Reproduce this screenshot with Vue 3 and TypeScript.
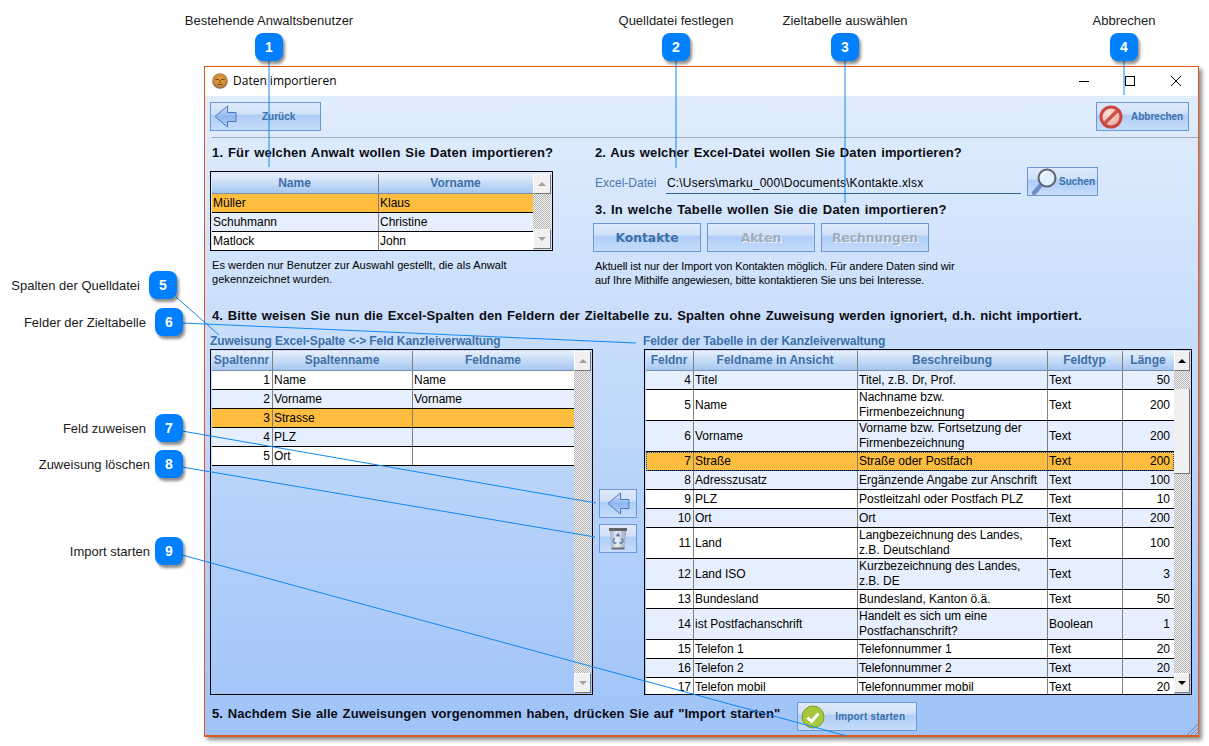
<template>
  <div class="page">
    <div class="window">
      <div class="titlebar">
        <svg class="app-icon" viewBox="0 0 16 16">
          <defs>
            <radialGradient id="appFill" cx="0.5" cy="0.45" r="0.55">
              <stop offset="0" stop-color="#e8a63f" />
              <stop offset="0.7" stop-color="#c98a3a" />
              <stop offset="1" stop-color="#7d6650" />
            </radialGradient>
          </defs>
          <circle cx="8" cy="8" r="7.800" fill="url(#appFill)" />
          <path d="M3.500 6.500h3.500M9 6.500h3.500M8 7v3M5.500 11.500h5" stroke="#8a3f1c" stroke-width="1.200" fill="none" />
        </svg>
        <span class="title">Daten importieren</span>
        <div class="win-controls">
          <svg width="12" height="12" viewBox="0 0 12 12"><path d="M1 6.500h10" stroke="#000" /></svg>
          <svg width="12" height="12" viewBox="0 0 12 12"><rect x="1.500" y="1.500" width="9" height="9" fill="none" stroke="#000" /></svg>
          <svg width="12" height="12" viewBox="0 0 12 12"><path d="M1 1l10 10M11 1L1 11" stroke="#000" /></svg>
        </div>
      </div>

      <div class="content">
        <div class="toolbar">
          <button class="btn btn-back">
            <svg class="arrow" width="23" height="23" viewBox="0 0 23 23">
              <defs>
                <linearGradient id="arrowFill" x1="0" y1="0" x2="0" y2="1">
                  <stop offset="0" stop-color="#d6e6fb" />
                  <stop offset="0.5" stop-color="#8fb6ee" />
                  <stop offset="1" stop-color="#b5d0f5" />
                </linearGradient>
              </defs>
              <path d="M1 11.500L13.500 1v6.500H22v9h-8.500v5.500z" fill="url(#arrowFill)" stroke="#4f76bd" />
            </svg>
            <span>Zurück</span>
          </button>
          <button class="btn btn-cancel">
            <svg width="24" height="24" viewBox="0 0 24 24">
              <defs>
                <radialGradient id="stopFill" cx="0.4" cy="0.35" r="0.7">
                  <stop offset="0" stop-color="#f6e3dc" />
                  <stop offset="1" stop-color="#e3a79c" />
                </radialGradient>
              </defs>
              <circle cx="12" cy="12" r="10" fill="url(#stopFill)" stroke="#c9473e" stroke-width="3" />
              <path d="M5.500 18.500L18.500 5.500" stroke="#cf5047" stroke-width="3.400" />
            </svg>
            <span>Abbrechen</span>
          </button>
        </div>
        <div class="separator"></div>

        <div class="top">
          <section class="top-left">
            <h2>1. Für welchen Anwalt wollen Sie Daten importieren?</h2>
            <div class="grid grid-lawyers">
              <div class="grid-main">
                <div class="row head">
                  <div v-for="c in lawyerCols" :key="c" class="cell">{{ c }}</div>
                </div>
                <div v-for="(r, i) in lawyers" :key="r[0]" class="row" :class="{ alt: i % 2 === 1, sel: i === 0 }">
                  <div class="cell">{{ r[0] }}</div>
                  <div class="cell">{{ r[1] }}</div>
                </div>
              </div>
              <div class="scroll">
                <div class="sb-btn"><i class="up"></i></div>
                <div class="sb-btn"><i class="down"></i></div>
              </div>
            </div>
            <p class="hint hint-left">Es werden nur Benutzer zur Auswahl gestellt, die als Anwalt<br />gekennzeichnet wurden.</p>
          </section>

          <section class="top-right">
            <h2>2. Aus welcher Excel-Datei wollen Sie Daten importieren?</h2>
            <div class="file-row">
              <label>Excel-Datei</label>
              <div class="file-input">C:\Users\marku_000\Documents\Kontakte.xlsx</div>
              <button class="btn btn-search">
                <svg width="28" height="28" viewBox="0 0 28 28">
                  <path d="M3 25l7-8" stroke="#6f8fc4" stroke-width="4.500" stroke-linecap="round" />
                  <circle cx="16" cy="10" r="8.500" fill="#dff2fd" stroke="#5d6675" stroke-width="2" />
                  <path d="M11 9a5 5 0 0 1 5-5" stroke="#fff" stroke-width="2" fill="none" />
                </svg>
                <span>Suchen</span>
              </button>
            </div>
            <h2 class="h3">3. In welche Tabelle wollen Sie die Daten importieren?</h2>
            <div class="target-row">
              <button class="btn btn-target active">Kontakte</button>
              <button class="btn btn-target">Akten</button>
              <button class="btn btn-target">Rechnungen</button>
            </div>
            <p class="hint hint-right">Aktuell ist nur der Import von Kontakten möglich. Für andere Daten sind wir<br />auf Ihre Mithilfe angewiesen, bitte kontaktieren Sie uns bei Interesse.</p>
          </section>
        </div>

        <h2 class="h4">4. Bitte weisen Sie nun die Excel-Spalten den Feldern der Zieltabelle zu. Spalten ohne Zuweisung werden ignoriert, d.h. nicht importiert.</h2>

        <div class="mapping">
          <div class="map-left">
            <div class="caption">Zuweisung Excel-Spalte &lt;-&gt; Feld Kanzleiverwaltung</div>
            <div class="grid grid-columns">
              <div class="grid-main">
                <div class="row head">
                  <div v-for="c in sourceCols" :key="c" class="cell">{{ c }}</div>
                </div>
                <div v-for="(r, i) in sourceRows" :key="r[0]" class="row" :class="{ alt: i % 2 === 1, sel: i === 2 }">
                  <div class="cell num">{{ r[0] }}</div>
                  <div class="cell">{{ r[1] }}</div>
                  <div class="cell">{{ r[2] }}</div>
                </div>
              </div>
              <div class="scroll">
                <div class="sb-btn"><i class="up"></i></div>
                <div class="sb-btn"><i class="down"></i></div>
              </div>
            </div>
          </div>

          <div class="map-actions">
            <button class="btn btn-icon">
              <svg width="23" height="23" viewBox="0 0 23 23">
                <path d="M1 11.500L13.500 1v6.500H22v9h-8.500v5.500z" fill="url(#arrowFill)" stroke="#4f76bd" />
              </svg>
            </button>
            <button class="btn btn-icon">
              <svg width="20" height="23" viewBox="0 0 20 23">
                <defs>
                  <linearGradient id="binFill" x1="0" y1="0" x2="1" y2="0">
                    <stop offset="0" stop-color="#a3aebd" />
                    <stop offset="0.45" stop-color="#eef2f6" />
                    <stop offset="1" stop-color="#98a4b4" />
                  </linearGradient>
                </defs>
                <path d="M2 3h16l-1.500 19h-13z" fill="url(#binFill)" />
                <rect x="1" y="1" width="18" height="3" fill="#5f6368" />
                <rect x="3.500" y="20.500" width="13" height="2" fill="#6b6f75" />
                <path d="M8.500 9.500l1.500-2.500 1.500 2.500M13.500 11l1.500 3-1.500 2h-2M8.500 16H6l-1-2 1.500-3" fill="none" stroke="#5f7fb8" stroke-width="1.500" />
              </svg>
            </button>
          </div>

          <div class="map-right">
            <div class="caption caption-right">Felder der Tabelle in der Kanzleiverwaltung</div>
            <div class="grid grid-fields">
              <div class="grid-main">
                <div class="row head">
                  <div v-for="c in fieldCols" :key="c" class="cell">{{ c }}</div>
                </div>
                <div
                  v-for="(r, i) in fieldRows"
                  :key="r.nr"
                  class="row"
                  :class="{ alt: i % 2 === 0 && r.nr !== 7, sel: r.nr === 7, tall: r.desc.includes('\n') }"
                >
                  <div class="cell num">{{ r.nr }}</div>
                  <div class="cell">{{ r.name }}</div>
                  <div class="cell desc">{{ r.desc }}</div>
                  <div class="cell">{{ r.type }}</div>
                  <div class="cell num">{{ r.len }}</div>
                </div>
              </div>
              <div class="scroll">
                <div class="sb-btn dark"><i class="up"></i></div>
                <div class="sb-thumb"></div>
                <div class="sb-btn dark"><i class="down"></i></div>
              </div>
            </div>
          </div>
        </div>

        <div class="bottom">
          <h2>5. Nachdem Sie alle Zuweisungen vorgenommen haben, drücken Sie auf "Import starten"</h2>
          <button class="btn btn-start">
            <svg width="24" height="24" viewBox="0 0 24 24">
              <circle cx="12" cy="12" r="11" fill="#a6c63c" stroke="#7f9c2a" />
              <path d="M6.500 12.500l4 4 7-8" fill="none" stroke="#fff" stroke-width="3" />
            </svg>
            <span>Import starten</span>
          </button>
        </div>

        <svg class="grip" width="12" height="12" viewBox="0 0 12 12">
          <path d="M1 12L12 1M5 12l7-7M9 12l3-3" stroke="#7f8b99" />
        </svg>
      </div>
    </div>

    <svg class="leaders" width="1209" height="746">
      <line v-for="(l, i) in leaders" :key="i" :x1="l[0]" :y1="l[1]" :x2="l[2]" :y2="l[3]" />
    </svg>
    <template v-for="c in callouts" :key="c.n">
      <div class="bubble" :style="{ left: c.x + 'px', top: c.y + 'px' }">{{ c.n }}</div>
      <div
        class="callout-label"
        :class="{ above: c.top }"
        :style="c.top
          ? { left: c.x + 14 - 120 + 'px', top: '12px' }
          : { right: 1209 - c.labelEnd! + 'px', top: c.y + 6 + 'px' }"
      >{{ c.label }}</div>
    </template>
  </div>
</template>

<script setup lang="ts">
interface Callout {
  n: number
  x: number
  y: number
  label: string
  top?: boolean
  labelEnd?: number
}

interface FieldRow {
  nr: number
  name: string
  desc: string
  type: string
  len: number
}

const lawyerCols = ['Name', 'Vorname']
const lawyers = [
  ['Müller', 'Klaus'],
  ['Schuhmann', 'Christine'],
  ['Matlock', 'John']
]

const sourceCols = ['Spaltennr', 'Spaltenname', 'Feldname']
const sourceRows = [
  [1, 'Name', 'Name'],
  [2, 'Vorname', 'Vorname'],
  [3, 'Strasse', ''],
  [4, 'PLZ', ''],
  [5, 'Ort', '']
]

const fieldCols = ['Feldnr', 'Feldname in Ansicht', 'Beschreibung', 'Feldtyp', 'Länge']
const fieldRows: FieldRow[] = [
  { nr: 4, name: 'Titel', desc: 'Titel, z.B. Dr, Prof.', type: 'Text', len: 50 },
  { nr: 5, name: 'Name', desc: 'Nachname bzw.\nFirmenbezeichnung', type: 'Text', len: 200 },
  { nr: 6, name: 'Vorname', desc: 'Vorname bzw. Fortsetzung der\nFirmenbezeichnung', type: 'Text', len: 200 },
  { nr: 7, name: 'Straße', desc: 'Straße oder Postfach', type: 'Text', len: 200 },
  { nr: 8, name: 'Adresszusatz', desc: 'Ergänzende Angabe zur Anschrift', type: 'Text', len: 100 },
  { nr: 9, name: 'PLZ', desc: 'Postleitzahl oder Postfach PLZ', type: 'Text', len: 10 },
  { nr: 10, name: 'Ort', desc: 'Ort', type: 'Text', len: 200 },
  { nr: 11, name: 'Land', desc: 'Langbezeichnung des Landes,\nz.B. Deutschland', type: 'Text', len: 100 },
  { nr: 12, name: 'Land ISO', desc: 'Kurzbezeichnung des Landes,\nz.B. DE', type: 'Text', len: 3 },
  { nr: 13, name: 'Bundesland', desc: 'Bundesland, Kanton ö.ä.', type: 'Text', len: 50 },
  { nr: 14, name: 'ist Postfachanschrift', desc: 'Handelt es sich um eine\nPostfachanschrift?', type: 'Boolean', len: 1 },
  { nr: 15, name: 'Telefon 1', desc: 'Telefonnummer 1', type: 'Text', len: 20 },
  { nr: 16, name: 'Telefon 2', desc: 'Telefonnummer 2', type: 'Text', len: 20 },
  { nr: 17, name: 'Telefon mobil', desc: 'Telefonnummer mobil', type: 'Text', len: 20 }
]

const callouts: Callout[] = [
  { n: 1, x: 255, y: 33, label: 'Bestehende Anwaltsbenutzer', top: true },
  { n: 2, x: 662, y: 33, label: 'Quelldatei festlegen', top: true },
  { n: 3, x: 831, y: 33, label: 'Zieltabelle auswählen', top: true },
  { n: 4, x: 1110, y: 33, label: 'Abbrechen', top: true },
  { n: 5, x: 149, y: 271, label: 'Spalten der Quelldatei', labelEnd: 140 },
  { n: 6, x: 155, y: 308, label: 'Felder der Zieltabelle', labelEnd: 146 },
  { n: 7, x: 155, y: 414, label: 'Feld zuweisen', labelEnd: 146 },
  { n: 8, x: 155, y: 450, label: 'Zuweisung löschen', labelEnd: 150 },
  { n: 9, x: 155, y: 537, label: 'Import starten', labelEnd: 150 }
]

const leaders: number[][] = [
  [269, 60, 269, 167],
  [676, 60, 676, 168],
  [845, 60, 845, 203],
  [1124, 60, 1124, 95],
  [176, 297, 219, 335],
  [182, 323, 636, 343],
  [182, 431, 596, 503],
  [182, 467, 595, 537],
  [182, 555, 847, 736]
]
</script>

<style>
html,
body {
  background: #fff;
}
</style>

<style scoped>
.page {
  position: relative;
  width: 1209px;
  height: 746px;
  padding: 66px 0 0 204px;
  box-sizing: border-box;
  overflow: hidden;
  font-family: "Liberation Sans", Arial, sans-serif;
  font-size: 12px;
  color: #000;
}

.window {
  width: 995px;
  height: 671px;
  box-sizing: border-box;
  display: flex;
  flex-direction: column;
  border: 1px solid #e2561f;
  border-bottom-width: 2px;
  box-shadow: 3px 3px 4px rgba(0, 0, 0, 0.45);
  background: #fff;
}

.titlebar {
  height: 29px;
  box-sizing: border-box;
  padding: 0 0 2px 7px;
  flex: none;
  display: flex;
  align-items: center;
}

.app-icon {
  width: 16px;
  height: 16px;
}

.title {
  margin-left: 5px;
  font-family: "Open Sans", sans-serif;
  font-size: 12px;
}

.win-controls {
  margin-left: auto;
  display: flex;
  gap: 34px;
  padding-right: 16px;
}

.content {
  position: relative;
  flex: 1;
  padding: 6px 6px 0 5px;
  background: linear-gradient(to bottom, #e1edfd, #9fc3f8);
}

.btn {
  display: flex;
  align-items: center;
  box-sizing: border-box;
  padding: 0;
  border: 1px solid #6b97d4;
  background: linear-gradient(to bottom, #dfeafb 0%, #cfe0f9 42%, #aecdf8 44%, #c6dcfa 100%);
  color: #3d6fa8;
  font-family: "Liberation Sans", Arial, sans-serif;
  font-weight: bold;
  font-size: 10px;
}

.toolbar {
  display: flex;
  justify-content: space-between;
  padding-right: 3px;
}

.btn-back {
  width: 111px;
  height: 29px;
}

.btn-back .arrow {
  margin-left: 3px;
}

.btn-back span {
  margin-left: 25px;
}

.btn-cancel {
  width: 93px;
  height: 29px;
  padding-left: 2px;
}

.btn-cancel span {
  margin-left: 8px;
}

.separator {
  height: 1px;
  margin: 6px -6px 0 2px;
  background: #a5adb8;
}

h2 {
  margin: 0;
  font-size: 13px;
  line-height: 16px;
  font-weight: bold;
  color: #0c0c14;
  letter-spacing: 0.1px;
  word-spacing: 1px;
  white-space: nowrap;
}

.top {
  display: flex;
  padding-top: 7px;
}

.top-left {
  width: 343px;
  margin-right: 40px;
}

.top-left h2 {
  padding-left: 2px;
  letter-spacing: 0.16px;
}

.top-right h2 {
  padding-left: 2px;
}

.hint {
  margin: 7px 0 0 2px;
  font-size: 11px;
  line-height: 14px;
}

.hint-left {
  letter-spacing: 0.05px;
}

.hint-right {
  letter-spacing: -0.09px;
}

.grid {
  display: flex;
  box-sizing: border-box;
  border: 1px solid #000;
  padding: 1px;
  overflow: hidden;
}

.grid-lawyers {
  height: 80px;
  margin-top: 10px;
  padding-top: 2px;
}

.grid-columns {
  width: 383px;
  height: 346px;
}

.grid-fields {
  width: 548px;
  height: 346px;
}

.grid-main {
  flex: none;
}

.row {
  display: grid;
  height: 19px;
  box-sizing: border-box;
  border-bottom: 1px solid #000;
  background: #fff;
}

.row.alt {
  background: #e6effd;
}

.row.sel {
  background: #febd3f;
}

.grid-fields .row.sel {
  outline: 1px dotted #1f4fa8;
  outline-offset: -1px;
}

.row.tall {
  height: 31px;
}

.row.head {
  height: 20px;
  border-bottom: 1px solid #7e8ea3;
  background: linear-gradient(to bottom, #e7f0fc, #a5c6f2);
  color: #3d6fa8;
  font-weight: bold;
}

.grid-lawyers .row {
  grid-template-columns: 167px 154px;
}

.grid-columns .row {
  grid-template-columns: 61px 140px 161px;
}

.grid-fields .row {
  grid-template-columns: 48px 164px 190px 75px 51px;
}

.cell {
  display: flex;
  align-items: center;
  padding: 0 2px 0 1px;
  border-right: 1px solid #7f7f7f;
  white-space: pre-line;
  line-height: 15px;
  overflow: hidden;
}

.cell:last-child {
  border-right: 0;
}

.grid-fields .cell.num:last-child {
  padding-right: 4px;
}

.head .cell {
  justify-content: center;
}

.cell.num {
  justify-content: flex-end;
}

.scroll {
  flex: 1;
  display: flex;
  flex-direction: column;
  justify-content: space-between;
  background: repeating-conic-gradient(#b4b4b4 0 25%, #f2f2f2 0 50%) 0 0 / 2px 2px;
}

.sb-btn {
  height: 18px;
  display: flex;
  align-items: center;
  justify-content: center;
  background: #f0f0f0;
  border: 1px solid #fff;
  border-right-color: #777;
  border-bottom-color: #777;
}

.sb-btn i {
  width: 0;
  height: 0;
  border-left: 4px solid transparent;
  border-right: 4px solid transparent;
}

.sb-btn .up {
  border-bottom: 4px solid #a0a0a0;
}

.sb-btn .down {
  border-top: 4px solid #a0a0a0;
}

.sb-btn.dark .up {
  border-bottom-color: #000;
}

.sb-btn.dark .down {
  border-top-color: #000;
}

.sb-thumb {
  height: 85px;
  margin-top: 18px;
  margin-bottom: auto;
  background: #f0f0f0;
  border-right: 1px solid #777;
  border-bottom: 1px solid #777;
  box-sizing: border-box;
}

.file-row {
  display: flex;
  align-items: flex-start;
  margin-top: 6px;
}

.file-row label {
  margin: 9px 0 0 2px;
  width: 71px;
  flex: none;
  color: #4b7bad;
  line-height: 14px;
}

.file-input {
  width: 355px;
  height: 27px;
  box-sizing: border-box;
  padding: 9px 0 0 1px;
  line-height: 14px;
  letter-spacing: 0.18px;
  border-bottom: 1px solid #2d62a3;
}

.btn-search {
  margin-left: 6px;
  width: 71px;
  height: 29px;
  padding-left: 3px;
}

.h3 {
  margin-top: 6px;
  letter-spacing: 0.2px;
}

.target-row {
  display: flex;
  gap: 6px;
  margin-top: 5px;
}

.btn-target {
  width: 108px;
  height: 29px;
  justify-content: center;
  font-family: "DejaVu Sans", sans-serif;
  font-size: 12.3px;
  color: #a2aebd;
  text-shadow: 1px 1px 0 #eef4fc;
}

.btn-target.active {
  color: #3d6fa8;
  text-shadow: none;
}

.h4 {
  margin-top: 21px;
  padding-left: 2px;
}

.mapping {
  display: flex;
  margin-top: 10px;
}

.caption {
  height: 15px;
  line-height: 14px;
  font-weight: bold;
  color: #3d6fa8;
  letter-spacing: -0.1px;
}

.caption-right {
  margin-left: -1px;
}

.map-actions {
  flex: none;
  width: 51px;
  padding: 155px 0 0 6px;
  box-sizing: border-box;
  display: flex;
  flex-direction: column;
  gap: 6px;
}

.btn-icon {
  width: 38px;
  height: 29px;
  justify-content: center;
}

.bottom {
  display: flex;
  align-items: flex-start;
  gap: 17px;
  padding-left: 2px;
  margin-top: 7px;
}

.bottom h2 {
  margin-top: 4px;
  letter-spacing: 0.08px;
}

.btn-start {
  width: 120px;
  height: 29px;
  padding-left: 3px;
}

.btn-start span {
  margin-left: 10px;
  letter-spacing: 0.2px;
}

.grip {
  position: absolute;
  right: 0;
  bottom: 0;
}

.leaders {
  position: absolute;
  left: 0;
  top: 0;
  pointer-events: none;
}

.leaders line {
  stroke: #1088f5;
  stroke-width: 1;
}

.bubble {
  position: absolute;
  width: 28px;
  height: 28px;
  border-radius: 8px;
  background: #007fff;
  box-shadow: 2px 3px 3px rgba(0, 0, 0, 0.45);
  color: #fff;
  font-weight: bold;
  font-size: 14px;
  line-height: 28px;
  text-align: center;
}

.callout-label {
  position: absolute;
  font-size: 13px;
  line-height: 16px;
  margin-top: 1px;
  color: #1a1a1a;
  white-space: nowrap;
}

.callout-label.above {
  width: 240px;
  text-align: center;
}
</style>
